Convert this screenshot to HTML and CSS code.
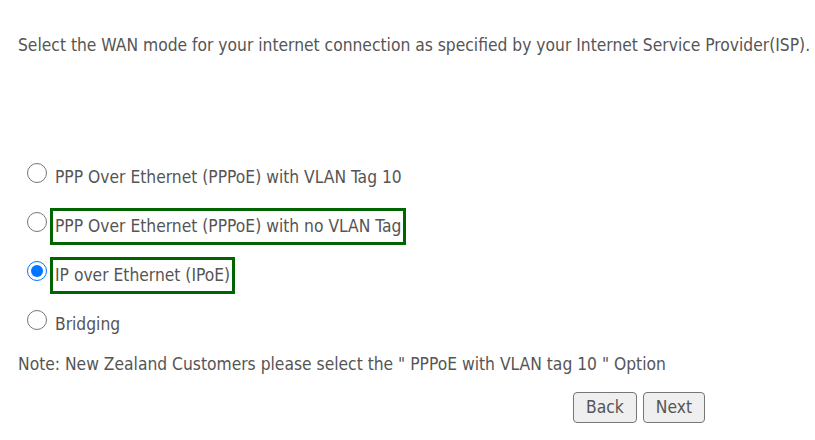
FILE: index.html
```html
<!DOCTYPE html>
<html lang="en">
  <head>
    <meta charset="UTF-8" />
    <title>WAN Mode</title>
    <link rel="stylesheet" href="styles.css">
  </head>
  <body>
    <main class="wan">
      <p class="intro">Select the WAN mode for your internet connection as specified by your Internet Service Provider(ISP).</p>
      <ul class="modes">
        <li>
          <label class="mode">
            <input type="radio" name="wan" value="pppoe-vlan" />
            <span class="mode-text">PPP Over Ethernet (PPPoE) with VLAN Tag 10</span>
          </label>
        </li>
        <li>
          <label class="mode">
            <input type="radio" name="wan" value="pppoe" />
            <span class="mode-text marked">PPP Over Ethernet (PPPoE) with no VLAN Tag</span>
          </label>
        </li>
        <li>
          <label class="mode">
            <input type="radio" name="wan" value="ipoe" checked />
            <span class="mode-text marked">IP over Ethernet (IPoE)</span>
          </label>
        </li>
        <li>
          <label class="mode">
            <input type="radio" name="wan" value="bridge" />
            <span class="mode-text">Bridging</span>
          </label>
        </li>
      </ul>
      <p class="note">Note: New Zealand Customers please select the " PPPoE with VLAN tag 10 " Option</p>
      <div class="actions">
        <button type="button">Back</button>
        <button type="button">Next</button>
      </div>
    </main>
  </body>
</html>
```

FILE: styles.css
```css
* {
  box-sizing: border-box;
  margin: 0;
  padding: 0;
}
body {
  background: #fff;
  color: #555;
  font-family: "DejaVu Sans Condensed", "DejaVu Sans", sans-serif;
  font-size: 17.3px;
  line-height: 19px;
}
.wan {
  padding: 36px 0 0 18px;
}
.intro {
  margin-bottom: 104px;
}
ul.modes {
  list-style: none;
  display: flex;
  flex-direction: column;
  gap: 12px;
  padding-left: 9px;

  & .mode {
    display: flex;
    align-items: flex-start;
    cursor: pointer;
  }
  & input {
    width: 20px;
    height: 20px;
    margin: 4px 3px 0 0;
  }
  & .mode-text {
    display: inline-block;
    padding: 6px 2px;
    border: 3px solid transparent;
  }
  & .mode-text.marked {
    border-color: #006400;
  }
}
.note {
  margin-top: 12px;
}
.actions {
  display: flex;
  justify-content: flex-end;
  gap: 6px;
  margin-top: 18px;
  padding-right: 110px;

  & button {
    height: 31px;
    padding: 0 12px;
    font: inherit;
    color: #555;
    background: #efefef;
    border: 1px solid #767676;
    border-radius: 4px;
    cursor: pointer;
  }
}
```
